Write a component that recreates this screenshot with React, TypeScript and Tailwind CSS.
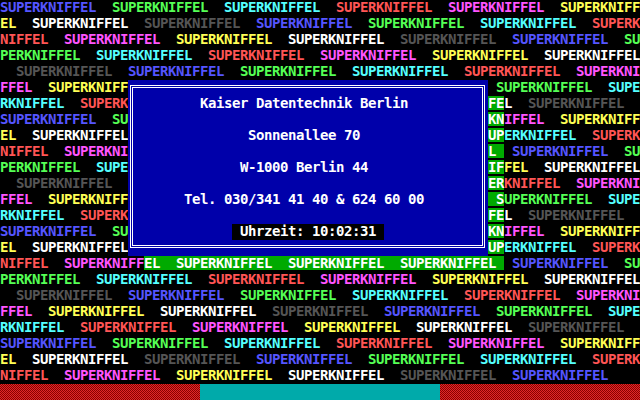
const WORD = "SUPERKNIFFEL";
const COLS = 80;
const ROWS = 24;
// text-mode palette, bright colours in the order the screen cycles them
const COLORS = [
  "text-[#5555ff]",
  "text-[#55ff55]",
  "text-[#55ffff]",
  "text-[#ff5555]",
  "text-[#ff55ff]",
  "text-[#ffff55]",
  "text-white",
  "text-[#555555]",
];
const SHADOW = "bg-[#00aa00] text-white";
const GAP = "gap";
// the stream stops after the last word that fits whole
const LAST = 1916;

function inShadow(r: number, c: number) {
  return (r >= 6 && r <= 16 && c >= 61 && c <= 62) || (r === 16 && c >= 18 && c <= 62);
}

// cells the dialog window writes over
function underDialog(r: number, c: number) {
  return r >= 5 && r <= 15 && c >= 16 && c <= 60;
}

type Run = { text: string; cls: string };

function buildRow(r: number): Run[] {
  const runs: Run[] = [];
  for (let c = 0; c < COLS; c++) {
    const prev = runs[runs.length - 1];
    if (underDialog(r, c)) {
      if (!prev || prev.cls !== GAP) runs.push({ text: "", cls: GAP });
      continue;
    }
    const p = r * COLS + c;
    const k = Math.floor(p / 14);
    const o = p % 14;
    const isChar = o < 12 && p < LAST;
    const ch = isChar ? WORD[o] : " ";
    let cls: string;
    if (inShadow(r, c)) cls = SHADOW;
    else if (isChar) cls = COLORS[k % 8];
    else cls = prev && prev.cls !== SHADOW && prev.cls !== GAP ? prev.cls : "";
    if (prev && prev.cls === cls) prev.text += ch;
    else runs.push({ text: ch, cls });
  }
  return runs;
}

const rows = Array.from({ length: ROWS }, (_, r) => buildRow(r));

function Dialog() {
  return (
    <div className="absolute left-[128px] top-[80px] h-[176px] w-[360px] bg-[#0000aa] text-white">
      <div className="absolute left-[2px] top-[5px] h-[163px] w-[355px] border-[3px] border-double border-white" />
      <div className="relative flex flex-col items-center gap-4 pt-4 pr-2">
        <div className="h-4">Kaiser Datentechnik Berlin</div>
        <div className="h-4">Sonnenallee 70</div>
        <div className="h-4">W-1000 Berlin 44</div>
        <div className="h-4">Tel. 030/341 41 40 &amp; 624 60 00</div>
        <div className="ml-2 h-4 bg-black">{" Uhrzeit: 10:02:31 "}</div>
      </div>
    </div>
  );
}

export default function App() {
  return (
    <div className="relative h-[400px] w-[640px] overflow-hidden bg-black font-['DejaVu_Sans_Mono',monospace] text-[14px] leading-[14px] font-bold tracking-[-0.428px] whitespace-pre">
      <div className="flex flex-col">
        {rows.map((runs, r) => (
          <div key={r} className="flex h-4 items-start">
            {runs.map((run, i) =>
              run.cls === GAP ? (
                <span key={i} className="h-4 w-[360px] shrink-0" />
              ) : (
                <span key={i} className={run.cls}>
                  {run.text}
                </span>
              )
            )}
          </div>
        ))}
      </div>
      <div className="flex h-4">
        <div className="w-[200px] bg-[#aa0000] bg-[repeating-conic-gradient(#e02828_0_25%,#8a0000_0_50%)] bg-[length:2px_2px]" />
        <div className="w-[240px] bg-[#00aaaa]" />
        <div className="flex-1 bg-[#aa0000] bg-[repeating-conic-gradient(#e02828_0_25%,#8a0000_0_50%)] bg-[length:2px_2px]" />
      </div>
      <Dialog />
    </div>
  );
}
